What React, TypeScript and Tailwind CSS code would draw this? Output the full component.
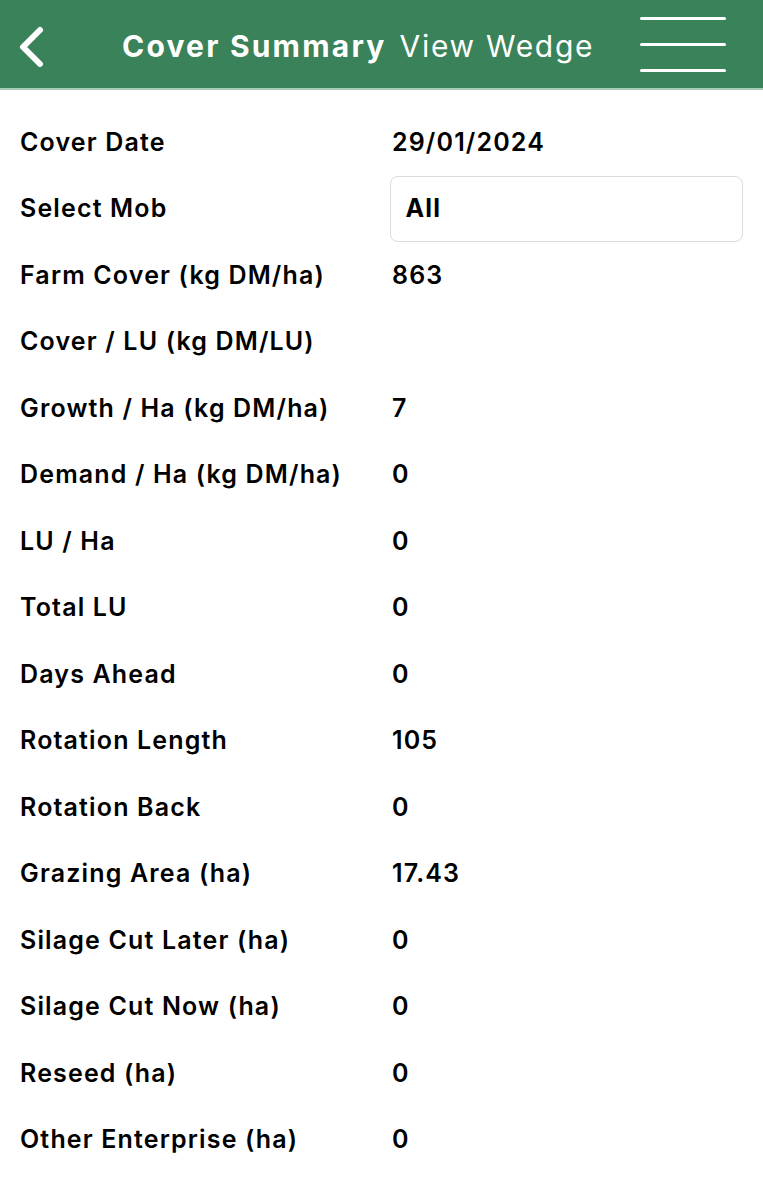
import React from "react";

const rows: [string, string][] = [
  ["Farm Cover (kg DM/ha)", "863"],
  ["Cover / LU (kg DM/LU)", ""],
  ["Growth / Ha (kg DM/ha)", "7"],
  ["Demand / Ha (kg DM/ha)", "0"],
  ["LU / Ha", "0"],
  ["Total LU", "0"],
  ["Days Ahead", "0"],
  ["Rotation Length", "105"],
  ["Rotation Back", "0"],
  ["Grazing Area (ha)", "17.43"],
  ["Silage Cut Later (ha)", "0"],
  ["Silage Cut Now (ha)", "0"],
  ["Reseed (ha)", "0"],
  ["Other Enterprise (ha)", "0"],
];

export default function App() {
  return (
    <div className="w-[763px] h-[1200px] bg-white text-black" style={{ fontFamily: "Inter, 'Liberation Sans', sans-serif" }}>
      <header className="h-[90px] bg-[#3a8259] border-b-2 border-[#a3cdb4] flex items-center relative">
        <svg className="absolute left-[16px] top-[26px]" width="30" height="42" viewBox="0 0 30 42">
          <path d="M24 4 L7 21 L24 38" fill="none" stroke="white" strokeWidth="6" strokeLinecap="round" strokeLinejoin="round" />
        </svg>
        <div className="ml-[122px] pt-[4px] flex items-baseline text-white">
          <span className="text-[30px] font-bold tracking-[2.2px]">Cover Summary</span>
          <span className="ml-[13px] text-[30px] font-normal tracking-[1.7px]">View Wedge</span>
        </div>
        <div className="absolute left-[640px] top-[17px] w-[86px] flex flex-col gap-[23px]">
          <div className="h-[3px] bg-white rounded-full" />
          <div className="h-[3px] bg-white rounded-full" />
          <div className="h-[3px] bg-white rounded-full" />
        </div>
      </header>
      <div className="px-[20px] pt-[19px] text-[25px] font-semibold tracking-[1.15px]">
        <div className="h-[66.5px] flex items-center">
          <div className="w-[372px]">Cover Date</div>
          <div>29/01/2024</div>
        </div>
        <div className="h-[66.5px] flex items-center">
          <div className="w-[371px]">Select Mob</div>
          <div className="w-[353px] h-[66px] border border-[#dcdcdc] rounded-[8px] flex items-center pl-[14px] font-bold">All</div>
        </div>
        {rows.map(([l, v]) => (
          <div key={l} className="h-[66.5px] flex items-center">
            <div className="w-[372px]">{l}</div>
            <div>{v}</div>
          </div>
        ))}
      </div>
    </div>
  );
}
